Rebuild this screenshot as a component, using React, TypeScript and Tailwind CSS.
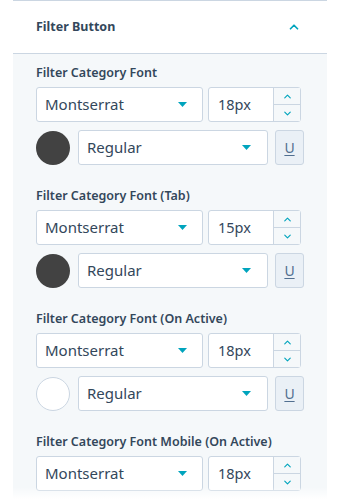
import { ChevronUp, ChevronDown } from "lucide-react"

const SECTIONS = [
  { label: "Filter Category Font", size: "18px", color: "dark" },
  { label: "Filter Category Font (Tab)", size: "15px", color: "dark" },
  { label: "Filter Category Font (On Active)", size: "18px", color: "white" },
  { label: "Filter Category Font Mobile (On Active)", size: "18px", color: "dark" },
]

function Caret() {
  return (
    <svg width="9" height="5" viewBox="0 0 9 5" className="shrink-0">
      <path d="M0 0 H9 L4.5 5 Z" fill="#00a4bd" />
    </svg>
  )
}

function FontRow({ size }: { size: string }) {
  return (
    <div className="flex gap-[5px]">
      <div className="w-[167px] h-[35px] bg-white border border-[#cbd6e2] rounded-[3px] flex items-center justify-between pl-[8px] pr-[15px]">
        <span className="text-[15px] text-[#33475b]">Montserrat</span>
        <Caret />
      </div>
      <div className="w-[93px] h-[35px] bg-white border border-[#cbd6e2] rounded-[3px] flex">
        <div className="flex-1 flex items-center pl-[9px] text-[14.5px] text-[#33475b]">{size}</div>
        <div className="w-[27px] flex flex-col border-l border-[#cbd6e2] bg-[#f5f8fa]">
          <div className="flex-1 flex items-center justify-center border-b border-[#cbd6e2]">
            <ChevronUp className="w-[11px] h-[11px] text-[#00a4bd]" strokeWidth={2.5} />
          </div>
          <div className="flex-1 flex items-center justify-center">
            <ChevronDown className="w-[11px] h-[11px] text-[#00a4bd]" strokeWidth={2.5} />
          </div>
        </div>
      </div>
    </div>
  )
}

function StyleRow({ color }: { color: string }) {
  return (
    <div className="flex items-center gap-[8px]">
      <div
        className={`w-[34px] h-[34px] rounded-full shrink-0 ${
          color === "white" ? "bg-white border border-[#cbd6e2]" : "bg-[#424242]"
        }`}
      />
      <div className="w-[190px] h-[35px] bg-white border border-[#cbd6e2] rounded-[3px] flex items-center justify-between pl-[8px] pr-[16px]">
        <span className="text-[15px] text-[#33475b]">Regular</span>
        <Caret />
      </div>
      <div className="w-[29px] h-[35px] ml-[-1px] bg-[#eaf0f6] border border-[#cbd6e2] rounded-[3px] flex items-center justify-center">
        <span className="text-[14px] text-[#516f90] underline underline-offset-2">U</span>
      </div>
    </div>
  )
}

export default function App() {
  return (
    <div className="relative w-[340px] h-[499px] overflow-hidden bg-white font-['Noto_Sans',sans-serif]">
      <div className="mx-[13px]">
        {/* header */}
        <div className="h-[54px] border-y border-[#cbd6e2] flex items-center justify-between pl-[23px] pr-[26px]">
          <span className="text-[12.5px] font-bold text-[#33475b]">Filter Button</span>
          <ChevronUp className="w-[14px] h-[14px] text-[#00a4bd]" strokeWidth={3} />
        </div>

        {/* settings */}
        <div className="bg-[#f5f8fa] pl-[23px] pt-[10px] pb-[30px]">
          {SECTIONS.map((s, i) => (
            <div key={i} className="mb-[22px]">
              <div className="h-[18px] leading-[18px] text-[12.5px] font-semibold text-[#33475b] mb-[5px]">{s.label}</div>
              <FontRow size={s.size} />
              {i < 3 && (
                <div className="mt-[8px]">
                  <StyleRow color={s.color} />
                </div>
              )}
            </div>
          ))}
        </div>
      </div>
      <div className="absolute left-0 right-0 bottom-0 h-[12px] bg-gradient-to-t from-white to-transparent" />
    </div>
  )
}
